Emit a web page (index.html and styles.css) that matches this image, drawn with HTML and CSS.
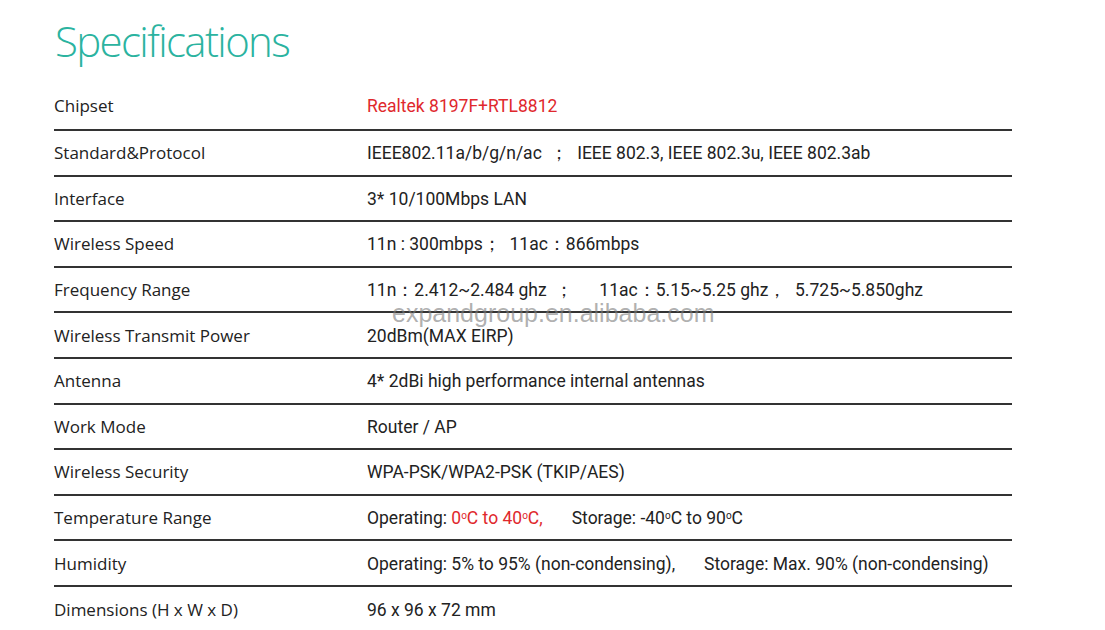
FILE: index.html
```html
<!DOCTYPE html>
<html lang="en">
<head>
<meta charset="utf-8">
<title>Specifications</title>
<link rel="stylesheet" href="styles.css">
</head>
<body>
<div class="page">
  <h1 class="title">Specifications</h1>
  <div class="specs">
    <div class="row first"><div class="label">Chipset</div><div class="value red">Realtek 8197F+RTL8812</div></div>
    <div class="row"><div class="label">Standard&amp;Protocol</div><div class="value">IEEE802.11a/b/g/n/ac &nbsp;；&nbsp; IEEE 802.3, IEEE 802.3u, IEEE 802.3ab</div></div>
    <div class="row"><div class="label">Interface</div><div class="value">3* 10/100Mbps LAN</div></div>
    <div class="row"><div class="label">Wireless Speed</div><div class="value">11n : 300mbps；&nbsp; 11ac：866mbps</div></div>
    <div class="row"><div class="label">Frequency Range</div><div class="value">11n：2.412~2.484 ghz &nbsp;；&nbsp;&nbsp;&nbsp;&nbsp;&nbsp; 11ac：5.15~5.25 ghz，&nbsp; 5.725~5.850ghz</div></div>
    <div class="row"><div class="label">Wireless Transmit Power</div><div class="value">20dBm(MAX EIRP)</div></div>
    <div class="row"><div class="label">Antenna</div><div class="value">4* 2dBi high performance internal antennas</div></div>
    <div class="row"><div class="label">Work Mode</div><div class="value">Router / AP</div></div>
    <div class="row"><div class="label">Wireless Security</div><div class="value">WPA-PSK/WPA2-PSK (TKIP/AES)</div></div>
    <div class="row"><div class="label">Temperature Range</div><div class="value">Operating: <span class="red">0<sup>o</sup>C to 40<sup>o</sup>C,</span><span class="gap"></span>Storage: -40<sup>o</sup>C to 90<sup>o</sup>C</div></div>
    <div class="row"><div class="label">Humidity</div><div class="value">Operating: 5% to 95% (non-condensing),<span class="gap"></span>Storage: Max. 90% (non-condensing)</div></div>
    <div class="row last"><div class="label">Dimensions (H x W x D)</div><div class="value">96 x 96 x 72 mm</div></div>
  </div>
  <div class="watermark">expandgroup.en.alibaba.com</div>
</div>
</body>
</html>
```
FILE: styles.css
```css
html, body { margin: 0; padding: 0; background: #fff; }
.page {
  position: relative;
  width: 1105px;
  height: 630px;
  overflow: hidden;
  padding-left: 54px;
  box-sizing: border-box;
}
.title {
  margin: 0;
  padding-top: 16px;
  height: 69.4px;
  line-height: 50px;
  font-family: "Open Sans", sans-serif;
  font-weight: 300;
  font-size: 42px;
  letter-spacing: -1.65px;
  color: #2bb3a0;
  padding-left: 1px;
}
.specs { width: 958px; }
.row {
  display: grid;
  grid-template-columns: 313px 1fr;
  align-items: center;
  height: 45.6px;
  box-sizing: border-box;
  border-bottom: 2px solid #333;
}
.row.first { padding-bottom: 3px; }
.row.last { border-bottom: none; }
.label {
  font-family: "Open Sans", sans-serif;
  font-size: 17px;
  color: #222;
  white-space: nowrap;
}
.value {
  font-family: Roboto, sans-serif;
  font-size: 17.5px;
  color: #222;
  white-space: nowrap;
  padding-top: 1px;
}
.red { color: #e0282d; }
.value sup { font-size: 10px; vertical-align: 5px; }
.gap { display: inline-block; width: 29px; }
.watermark {
  position: absolute;
  left: 392px;
  top: 299px;
  font-family: "Liberation Sans", Arial, sans-serif;
  font-size: 25px;
  color: rgba(125, 125, 125, 0.62);
  white-space: nowrap;
}
```
